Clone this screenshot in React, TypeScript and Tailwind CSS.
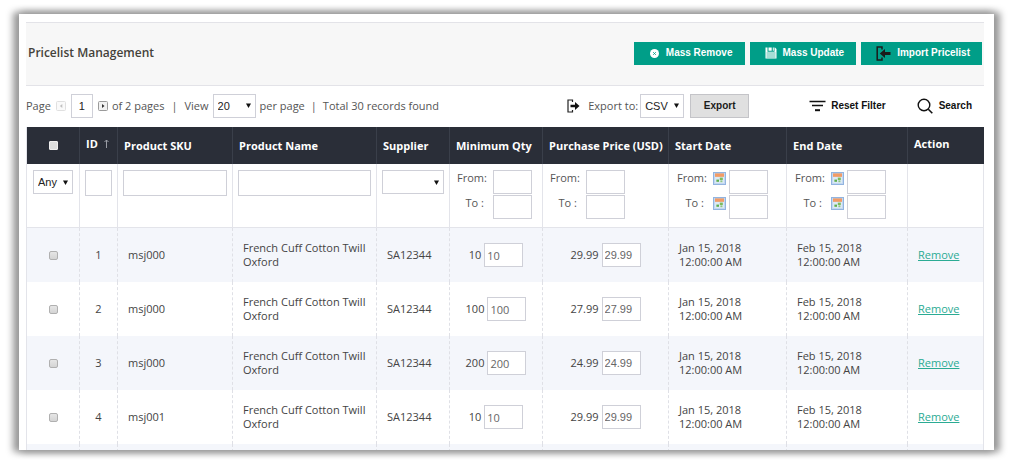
import React from "react";

type Item = {
  id: number;
  sku: string;
  name: string;
  supplier: string;
  qty: string;
  price: string;
  start: [string, string];
  end: [string, string];
};

const dates = {
  start: ["Jan 15, 2018", "12:00:00 AM"] as [string, string],
  end: ["Feb 15, 2018", "12:00:00 AM"] as [string, string],
};

const base = { name: "French Cuff Cotton Twill Oxford", supplier: "SA12344", ...dates };

const items: Item[] = [
  { id: 1, sku: "msj000", qty: "10", price: "29.99", ...base },
  { id: 2, sku: "msj000", qty: "100", price: "27.99", ...base },
  { id: 3, sku: "msj000", qty: "200", price: "24.99", ...base },
  { id: 4, sku: "msj001", qty: "10", price: "29.99", ...base },
];

const field = "rounded-none border border-[#cfd0d8] bg-white outline-none";

function Checkbox({ label, light }: { label: string; light?: boolean }) {
  return (
    <input
      type="checkbox"
      aria-label={label}
      className={
        light
          ? "block mx-auto size-[9px] appearance-none rounded-[1px] border border-[#eeeeee] bg-[#dddddd]"
          : "block mx-auto size-[9px] appearance-none rounded-[2px] border border-[#b0b0b0] bg-linear-to-b from-[#e6e6e6] to-[#d4d4d4]"
      }
    />
  );
}

function Select({ label, options, className }: { label: string; options: string[]; className: string }) {
  return (
    <span className={"inline-grid items-center " + className}>
      <select
        aria-label={label}
        className={"col-start-1 row-start-1 h-full w-full appearance-none pl-1 font-['Liberation_Sans',sans-serif] text-[11px] text-[#222222] " + field}
      >
        {options.map((o) => (
          <option key={o}>{o}</option>
        ))}
      </select>
      <svg viewBox="0 0 6 6" className="pointer-events-none col-start-1 row-start-1 mr-[5px] size-[5px] justify-self-end" aria-hidden="true">
        <path d="M0 0.5h6L3 6z" fill="#111" />
      </svg>
    </span>
  );
}

function CalendarIcon() {
  return (
    <svg viewBox="0 0 13 13" className="size-[13px]" aria-hidden="true">
      <rect x="0.5" y="0.5" width="12" height="12" fill="#c3d8f1" stroke="#92b4e0" />
      <rect x="2" y="2" width="9" height="9" fill="#dce9f5" />
      <rect x="2" y="1.5" width="9" height="3.2" fill="#f08a4b" />
      <rect x="2" y="2.6" width="9" height="0.8" fill="#f7b48c" />
      <rect x="6.8" y="5.6" width="3" height="2.4" fill="#7dbb5c" />
      <rect x="3.4" y="7.6" width="2.6" height="2.2" fill="#5cae4c" />
      <rect x="7.4" y="8.4" width="2" height="1.8" fill="#8fc780" />
    </svg>
  );
}

function Range({ label, calendar }: { label: string; calendar?: boolean }) {
  return (
    <div className="grid gap-px">
      {["From:", "To :"].map((t) => (
        <div key={t} className="flex h-6 items-center">
          <label htmlFor={label + t} className="w-[27px] pb-2 text-right whitespace-nowrap">
            {t}
          </label>
          <span className="w-[9px]" />
          {calendar && (
            <button type="button" aria-label={label + " calendar"} className="mr-[3px] pb-2">
              <CalendarIcon />
            </button>
          )}
          <input id={label + t} className={"h-6 w-[39px] px-1 " + field} />
        </div>
      ))}
    </div>
  );
}

function PageArrow({ flip, faded }: { flip?: boolean; faded?: boolean }) {
  return (
    <svg viewBox="0 0 10 10" className="size-[10px]" aria-hidden="true" opacity={faded ? 0.3 : 1}>
      <rect x="0.5" y="0.5" width="9" height="9" rx="1" fill="#f1f1f1" stroke="#9a9a9a" />
      <path d={flip ? "M6.3 3v4L3.800 5z" : "M4 3v4L6.500 5z"} fill="#333" />
    </svg>
  );
}

const actionButton =
  "flex h-[23px] items-center bg-[#009e88] font-['Liberation_Sans',sans-serif] text-[10px] font-bold text-white whitespace-nowrap";
const toolButton =
  "flex items-center font-['Liberation_Sans',sans-serif] text-[10px] font-bold text-[#111111] whitespace-nowrap";

const th = "border-r border-[#3a3f4a] pl-[6px] text-left font-bold whitespace-nowrap last:border-r-0";
const filterTd = "border-r border-b border-[#e3e4ea] pt-[6px] align-top";
const td = "border-r border-dashed border-[#dfe0e6] last:border-solid last:border-[#e3e4ea]";

export default function App() {
  return (
    <div className="h-screen bg-white pt-[14px] pr-5 pb-[14px] pl-[19px] font-['Open_Sans',sans-serif] text-[11px] leading-[14px] text-[#555555]">
      <main className="h-full overflow-hidden bg-white pt-2 pr-[10px] pl-[7px] shadow-[-4px_0_7px_2px_#9a9a9a,4px_0_7px_2px_#9a9a9a]">
        <header className="flex h-[64px] items-center justify-between border-y border-[#e3e3e8] bg-[#f7f7f7] pr-[2px] pb-[2px] pl-[2px]">
          <h1 className="text-xs font-semibold text-[#44423a]">Pricelist Management</h1>
          <div className="flex gap-[5px]">
            <button type="button" className={actionButton + " gap-[7px] pr-3 pl-4"}>
              <svg viewBox="0 0 9 9" className="size-[9px]" aria-hidden="true">
                <circle cx="4.5" cy="4.5" r="4.5" fill="#fff" />
                <path d="M3.2 3.2l2.6 2.6M5.8 3.2L3.2 5.8" stroke="#009e88" strokeWidth="0.9" />
              </svg>
              Mass Remove
            </button>
            <button type="button" className={actionButton + " gap-[6px] pr-3 pl-[15px]"}>
              <svg viewBox="0 0 12 12" className="size-3" aria-hidden="true">
                <path d="M0.5 0.5h2v4.200h7V0.5h0.500l1.500 1.500v9.500h-11z" fill="#fff" />
                <path d="M3.5 0.5h3.200v3.200H3.5zM7.800 0.5h1v3.200h-1z" fill="#fff" />
                <path d="M1.5 6h9M1.5 8h9M1.5 10h9" stroke="#009e88" strokeWidth="0.7" />
              </svg>
              Mass Update
            </button>
            <button type="button" className={actionButton + " gap-[6px] pr-3 pl-[15px]"}>
              <svg viewBox="0 0 15 15" className="size-[15px]" aria-hidden="true">
                <path d="M6 3.5V1H1.2v13H6v-2.500" fill="none" stroke="#1b1b1b" strokeWidth="1.5" />
                <path d="M3.8 7.500L9 3v3h5.500v3H9v3z" fill="#1b1b1b" />
              </svg>
              Import Pricelist
            </button>
          </div>
        </header>

        <div className="flex h-[41px] items-center pb-[2px]">
          <label htmlFor="page">Page</label>
          <button type="button" aria-label="Previous page" className="ml-[5px]">
            <PageArrow flip faded />
          </button>
          <input
            id="page"
            defaultValue="1"
            className={"mx-[5px] h-6 w-[22px] text-center font-['Liberation_Sans',sans-serif] text-[11px] text-[#222222] " + field}
          />
          <button type="button" aria-label="Next page">
            <PageArrow />
          </button>
          <span className="ml-1">of 2 pages</span>
          <span className="mx-[7px]">|</span>
          <span className="mr-1">View</span>
          <Select label="Records per page" options={["20", "50"]} className="h-6 w-[43px]" />
          <span className="ml-1">per page</span>
          <span className="mx-[6px]">|</span>
          <span>Total 30 records found</span>

          <div className="ml-auto flex items-center">
            <svg viewBox="0 0 13 14" className="mr-2 h-[14px] w-[13px]" aria-hidden="true">
              <path d="M5.500 3V1H1v12h4.500v-2" fill="none" stroke="#222" strokeWidth="1.2" />
              <path d="M3.500 5.800h4.500V3l4.500 4L8 11V8.200H3.500z" fill="#111" />
            </svg>
            <span className="mr-[2px]">Export to:</span>
            <Select label="Export to" options={["CSV", "XML"]} className="h-6 w-[44px]" />
            <button
              type="button"
              className="ml-[6px] h-6 w-[59px] border border-[#c4c4c8] bg-[#e0e0e0] font-['Liberation_Sans',sans-serif] text-[10px] font-bold text-[#1b1b1b]"
            >
              Export
            </button>
            <button type="button" className={toolButton + " ml-[60px] gap-[5px]"}>
              <svg viewBox="0 0 17 12" className="h-3 w-[17px]" aria-hidden="true">
                <path d="M0.500 1.500h16M3 5.500h11" stroke="#111" strokeWidth="1.6" />
                <path d="M6 10.200h5" stroke="#111" strokeWidth="2" />
              </svg>
              Reset Filter
            </button>
            <button type="button" className={toolButton + " mr-3 ml-[31px] gap-[6px]"}>
              <svg viewBox="0 0 16 16" className="size-4" aria-hidden="true">
                <circle cx="7" cy="7" r="5.800" fill="none" stroke="#111" strokeWidth="1.4" />
                <path d="M11.300 11.300l4 4" stroke="#111" strokeWidth="1.600" />
              </svg>
              Search
            </button>
          </div>
        </div>

        <table className="w-full table-fixed border-separate border-spacing-0 border-l border-[#e3e4ea]">
          <colgroup>
            <col className="w-[53px]" />
            <col className="w-[38px]" />
            <col className="w-[115px]" />
            <col className="w-[144px]" />
            <col className="w-[73px]" />
            <col className="w-[93px]" />
            <col className="w-[126px]" />
            <col className="w-[118px]" />
            <col className="w-[121px]" />
            <col className="w-[76px]" />
          </colgroup>
          <thead>
            <tr className="h-[37px] bg-[#2a2e38] text-white">
              <th className="border-r border-[#3a3f4a]">
                <Checkbox label="Select all" light />
              </th>
              <th className={th}>
                <span className="flex items-center gap-[6px] pb-1">
                  ID
                  <svg viewBox="0 0 5 9" className="h-[9px] w-[5px]" aria-hidden="true">
                    <path d="M2.500 9V1M0.500 3l2-2 2 2" fill="none" stroke="#9a9da5" />
                  </svg>
                </span>
              </th>
              <th className={th}>Product SKU</th>
              <th className={th}>Product Name</th>
              <th className={th}>Supplier</th>
              <th className={th}>Minimum Qty</th>
              <th className={th}>Purchase Price (USD)</th>
              <th className={th}>Start Date</th>
              <th className={th}>End Date</th>
              <th className={th + " pb-1"}>Action</th>
            </tr>
          </thead>
          <tbody>
            <tr className="h-[64px]">
              <td className={filterTd + " px-[6px]"}>
                <Select label="Filter by selection" options={["Any", "Yes", "No"]} className="h-6 w-full" />
              </td>
              <td className={filterTd + " px-[5px]"}>
                <input aria-label="Filter by ID" className={"block h-[26px] w-full px-1 " + field} />
              </td>
              <td className={filterTd + " px-[5px]"}>
                <input aria-label="Filter by SKU" className={"block h-[26px] w-full px-1 " + field} />
              </td>
              <td className={filterTd + " px-[5px]"}>
                <input aria-label="Filter by name" className={"block h-[26px] w-full px-1 " + field} />
              </td>
              <td className={filterTd + " px-[5px]"}>
                <Select label="Filter by supplier" options={[""]} className="h-6 w-full" />
              </td>
              <td className={filterTd + " pl-[7px]"}>
                <Range label="Minimum Qty" />
              </td>
              <td className={filterTd + " pl-[7px]"}>
                <Range label="Purchase Price" />
              </td>
              <td className={filterTd + " pl-2"}>
                <Range label="Start Date" calendar />
              </td>
              <td className={filterTd + " pl-2"}>
                <Range label="End Date" calendar />
              </td>
              <td className={filterTd} />
            </tr>
            {items.map((r) => (
              <tr key={r.id} className="h-[54px] text-[#444444] odd:bg-white even:bg-[#f4f6fb]">
                <td className={td}>
                  <Checkbox label={"Select record " + r.id} />
                </td>
                <td className={td + " text-center"}>{r.id}</td>
                <td className={td + " pl-[10px]"}>{r.sku}</td>
                <td className={td + " pr-[5px] pl-[10px]"}>{r.name}</td>
                <td className={td + " pl-[10px]"}>{r.supplier}</td>
                <td className={td}>
                  <div className="flex items-center justify-center gap-[3px]">
                    {r.qty}
                    <input
                      aria-label={"Quantity " + r.id}
                      defaultValue={r.qty}
                      className={"h-6 w-[39px] px-[2px] text-[#666666] " + field}
                    />
                  </div>
                </td>
                <td className={td}>
                  <div className="flex items-center justify-center gap-[3px]">
                    {r.price}
                    <input
                      aria-label={"Price " + r.id}
                      defaultValue={r.price}
                      className={"h-6 w-[39px] px-[2px] font-['Liberation_Sans',sans-serif] text-[#666666] " + field}
                    />
                  </div>
                </td>
                <td className={td + " pl-[10px]"}>
                  {r.start[0]}
                  <br />
                  {r.start[1]}
                </td>
                <td className={td + " pl-[10px]"}>
                  {r.end[0]}
                  <br />
                  {r.end[1]}
                </td>
                <td className={td + " pl-[10px]"}>
                  <a href="#remove" className="text-[#2bab94] underline">
                    Remove
                  </a>
                </td>
              </tr>
            ))}
            <tr className="h-[54px] bg-[#f4f6fb]">
              {Array.from({ length: 10 }, (_, i) => (
                <td key={i} className={td} />
              ))}
            </tr>
          </tbody>
        </table>
      </main>
    </div>
  );
}
